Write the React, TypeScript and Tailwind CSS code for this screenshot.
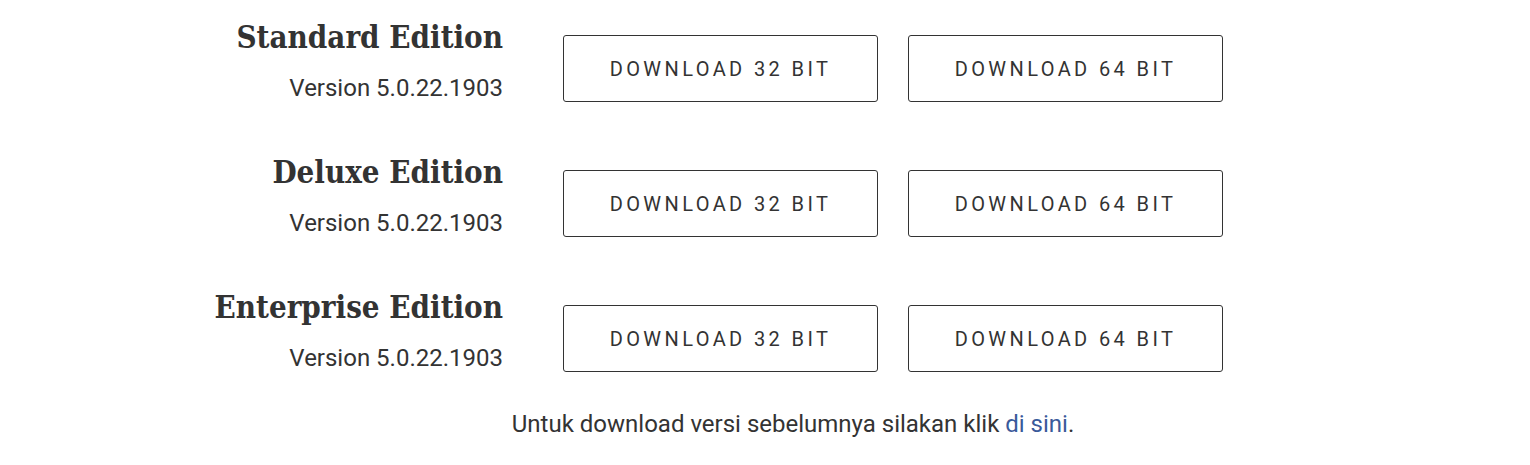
const editions = [
  { name: 'Standard Edition', version: '5.0.22.1903' },
  { name: 'Deluxe Edition', version: '5.0.22.1903' },
  { name: 'Enterprise Edition', version: '5.0.22.1903' },
];

const DownloadButton = ({ label }: { label: string }) => (
  <a
    href="#"
    className="flex h-[67px] w-[315px] items-center justify-center rounded-[3px] border border-[#333] text-[20px] uppercase tracking-[3.4px] text-[#333]"
  >
    {label}
  </a>
);

export default function App() {
  return (
    <div className="min-h-screen bg-white pt-[35px] font-['Roboto',sans-serif] text-[#333]">
      <div className="flex flex-col gap-[67px]">
        {editions.map((ed) => (
          <div key={ed.name} className="flex items-start">
            <div className="flex w-[503px] flex-col items-end text-right">
              <h2 className="-mt-[20px] font-['DejaVu_Serif',serif] text-[31px] font-bold leading-[44px] [font-stretch:condensed]">
                {ed.name}
              </h2>
              <p className="mt-[14px] text-[24px] leading-[30px]">Version {ed.version}</p>
            </div>
            <div className="ml-[60px] flex gap-[30px]">
              <DownloadButton label="Download 32 bit" />
              <DownloadButton label="Download 64 bit" />
            </div>
          </div>
        ))}
      </div>
      <p className="ml-[56px] mt-[33px] text-center text-[24px] leading-[36px]">
        Untuk download versi sebelumnya silakan klik{' '}
        <a href="#" className="text-[#3a5a9a]">
          di sini
        </a>
        .
      </p>
    </div>
  );
}
